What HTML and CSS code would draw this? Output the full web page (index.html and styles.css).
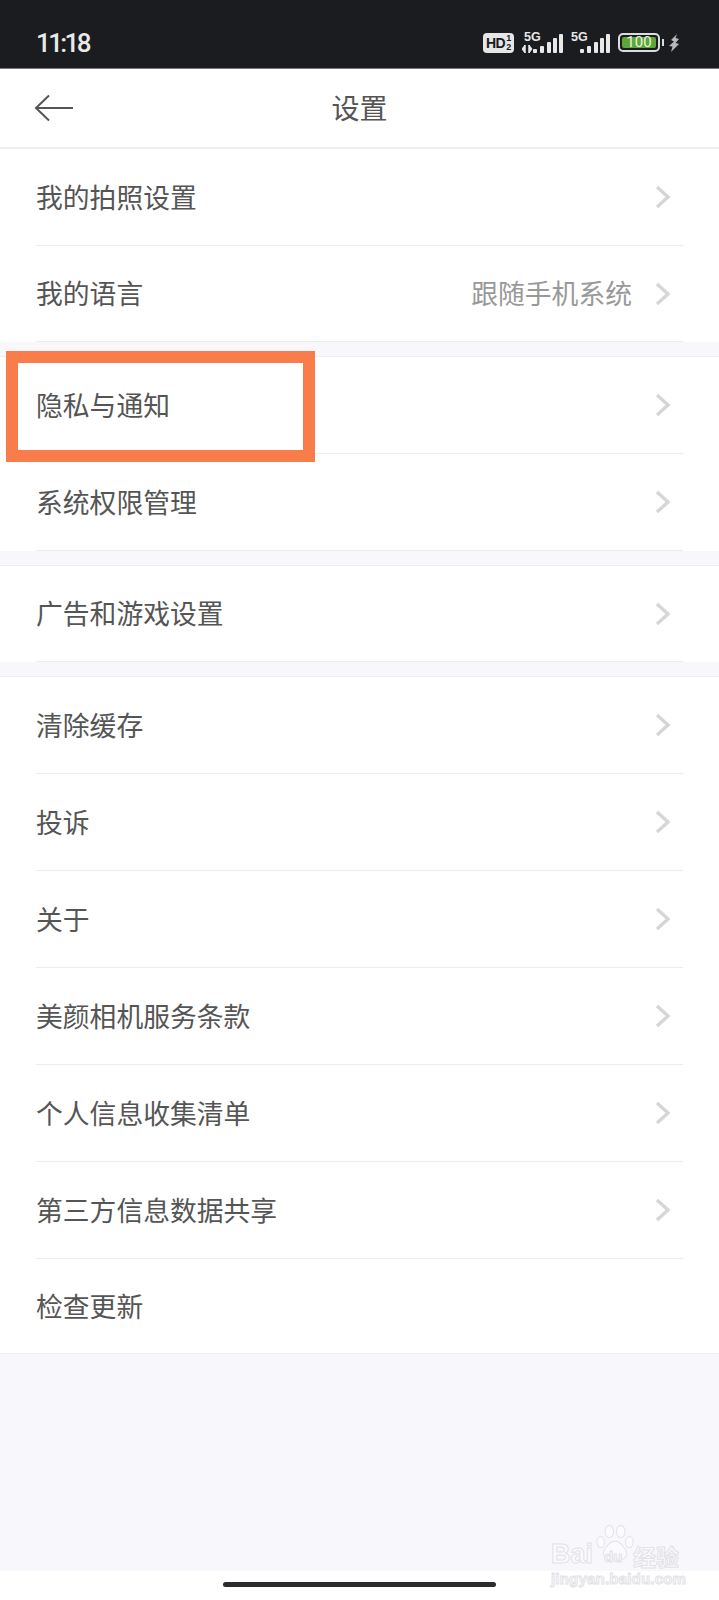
FILE: index.html
```html
<!DOCTYPE html>
<html lang="zh-CN">
<head><meta charset="UTF-8">
<meta name="viewport" content="width=device-width,initial-scale=1.0">
<title>设置</title>
<link rel="stylesheet" href="styles.css">
</head>
<body>

<svg class="defs" width="0" height="0">
  <symbol id="chev" viewBox="0 0 16 24"><path d="M2 2l11 10L2 22" fill="none" stroke="#d6d6d6" stroke-width="3.4"/></symbol>
</svg>

<div class="page">
  <!-- status bar -->
  <div class="status">
    <span class="time">11:18</span>
    <div class="status-icons">
      <div class="hd"><span class="hd-text">HD</span><span class="hd-sim"><i>1</i><i>2</i></span></div>
      <div class="net">
        <span class="net-label">5G</span>
        <svg width="41" height="20" viewBox="0 0 41 20">
          <path d="M3 12v8M0 16l3-4v8zM7 12v8M10 16l-3 4v-8z" fill="#e8e8e8" stroke="#e8e8e8" stroke-width="1"/>
          <rect x="11" y="16" width="4" height="4" rx="1" fill="#e8e8e8"/>
          <rect x="18" y="13" width="4" height="7" rx="1" fill="#e8e8e8"/>
          <rect x="25" y="9" width="4" height="11" rx="1" fill="#e8e8e8"/>
          <rect x="31" y="5" width="4" height="15" rx="1" fill="#e8e8e8"/>
          <rect x="37" y="1" width="4" height="19" rx="1" fill="#e8e8e8"/>
        </svg>
      </div>
      <div class="net">
        <span class="net-label">5G</span>
        <svg width="41" height="20" viewBox="0 0 41 20">
          <rect x="11" y="16" width="4" height="4" rx="1" fill="#e8e8e8"/>
          <rect x="18" y="13" width="4" height="7" rx="1" fill="#e8e8e8"/>
          <rect x="25" y="9" width="4" height="11" rx="1" fill="#e8e8e8"/>
          <rect x="31" y="5" width="4" height="15" rx="1" fill="#e8e8e8"/>
          <rect x="37" y="1" width="4" height="19" rx="1" fill="#e8e8e8"/>
        </svg>
      </div>
      <div class="battery"><span class="battery-fill">100</span></div>
      <span class="battery-tip"></span>
      <svg class="bolt" width="11" height="18" viewBox="0 0 11 18"><path d="M8 0 2 6l3 1.500L0 12l3.500 0.500L2 18l8-8-3.500-1L10 5 6.500 4z" fill="#b9b9b9"/></svg>
    </div>
  </div>

  <div class="header">
    <svg class="back" width="40" height="28" viewBox="0 0 40 28"><path d="M15 1.500 2 14l13 12.500M2 14h37" fill="none" stroke="#555" stroke-width="2"/></svg>
    <span class="title">设置</span>
  </div>

  <div class="group group-first">
    <div class="row"><span>我的拍照设置</span><svg class="chev"><use href="#chev"/></svg></div>
    <div class="row"><span>我的语言</span><span class="row-value">跟随手机系统</span><svg class="chev"><use href="#chev"/></svg></div>
  </div>

  <div class="group">
    <div class="row"><span>隐私与通知</span><svg class="chev"><use href="#chev"/></svg></div>
    <div class="row"><span>系统权限管理</span><svg class="chev"><use href="#chev"/></svg></div>
  </div>

  <div class="group group-single">
    <div class="row"><span>广告和游戏设置</span><svg class="chev"><use href="#chev"/></svg></div>
  </div>

  <div class="group group-last">
    <div class="row"><span>清除缓存</span><svg class="chev"><use href="#chev"/></svg></div>
    <div class="row"><span>投诉</span><svg class="chev"><use href="#chev"/></svg></div>
    <div class="row"><span>关于</span><svg class="chev"><use href="#chev"/></svg></div>
    <div class="row"><span>美颜相机服务条款</span><svg class="chev"><use href="#chev"/></svg></div>
    <div class="row"><span>个人信息收集清单</span><svg class="chev"><use href="#chev"/></svg></div>
    <div class="row"><span>第三方信息数据共享</span><svg class="chev"><use href="#chev"/></svg></div>
    <div class="row"><span>检查更新</span></div>
  </div>

  <div class="filler"></div>

  <div class="nav-bar"><span class="home"></span></div>

  <!-- annotation box + watermark sit over the screenshot -->
  <div class="highlight"></div>
  <div class="mark">
    <div class="mark-top">
      <span>Bai</span>
      <svg class="paw" width="40" height="40" viewBox="0 0 42 42">
        <g fill="#fbfbfd" stroke="#e6e6ea" stroke-width="1.200">
          <ellipse cx="6" cy="20" rx="4" ry="6"/>
          <ellipse cx="15" cy="9" rx="4.500" ry="6.500"/>
          <ellipse cx="27" cy="9" rx="4.500" ry="6.500"/>
          <ellipse cx="36" cy="20" rx="4" ry="6"/>
          <path d="M21 19c-6 0-8 5-11 9-3 5 0 11 6 10 3-.5 7-.5 10 0 6 1 9-5 6-10-3-4-5-9-11-9z"/>
        </g>
      </svg>
      <span class="mark-du">du</span>
      <span class="mark-cn">经验</span>
    </div>
    <div class="mark-url">jingyan.baidu.com</div>
  </div>
</div>

</body>
</html>
```

FILE: styles.css
```css
*,*::before,*::after{box-sizing:border-box;margin:0;padding:0}
body{
  background:#f8f8fc;
  font-family:"Noto Sans CJK SC","Noto Sans",sans-serif;
  color:#555;
}
.defs{position:absolute}

.page{
  position:relative;
  width:719px;
  height:1600px;
  overflow:hidden;
  display:flex;
  flex-direction:column;
}

/* === STATUS BAR === */
.status{
  height:69px;
  flex:none;
  background:#1b1c20;
  border-bottom:1px solid #77787a;
  display:flex;
  align-items:center;
  padding:17px 0 0 36px;
}
.time{
  font-family:Roboto,sans-serif;
  font-size:26px;
  font-weight:500;
  letter-spacing:-2.600px;
  color:#e9e9e9;
}
.status-icons{
  margin-left:auto;
  margin-right:39px;
  display:flex;
  align-items:center;
  height:30px;
}
.hd{
  width:31px;
  height:20px;
  border-radius:4px;
  background:#e6e6e6;
  color:#1b1c20;
  display:flex;
  align-items:center;
  padding-left:3px;
  margin-right:8px;
  font-family:"Liberation Sans",sans-serif;
  font-weight:700;
}
.hd-text{font-size:14px;letter-spacing:-.5px}
.hd-sim{
  display:flex;
  flex-direction:column;
  font-size:9px;
  line-height:9px;
  margin-left:1px;
}
.hd-sim i{font-style:normal}
.net{
  position:relative;
  width:41px;
  height:20px;
  margin-right:6px;
  display:flex;
}
.net + .battery{margin-left:2px}
.net-label{
  position:absolute;
  left:2px;
  top:-3px;
  font-family:"Liberation Sans",sans-serif;
  font-weight:700;
  font-size:12.500px;
  line-height:14px;
  color:#e8e8e8;
}
.battery{
  width:42px;
  height:19px;
  border:2px solid #dcdcdc;
  border-radius:5px;
  padding:2px;
  display:flex;
}
.battery-fill{
  flex:1;
  background:#5ea53a;
  border-radius:2px;
  color:#e8f4de;
  font-family:Roboto,sans-serif;
  font-size:15px;
  line-height:11px;
  text-align:center;
}
.battery-tip{
  width:2px;
  height:7px;
  margin-left:2px;
  background:#dcdcdc;
}
.bolt{margin-left:5px}

/* === HEADER === */
.header{
  height:80px;
  flex:none;
  background:#fff;
  border-bottom:2px solid #eeeeee;
  display:flex;
  align-items:center;
  justify-content:center;
  position:relative;
}
.back{position:absolute;left:34px;top:25px}
.title{font-size:28px;color:#555;margin-bottom:3px}

/* === LIST === */
.group{
  flex:none;
  background:#fff;
  margin-top:14px;
  border-top:1px solid #eeeef1;
}
.group-first{margin-top:0;border-top:0}
.group-first .row:last-child{height:96px}
.row{
  height:97px;
  margin:0 36px;
  border-bottom:1px solid #ececec;
  display:flex;
  align-items:center;
  font-size:26.800px;
  color:#555;
}
.row > span{margin-bottom:2px}
.group-single .row{height:96px}
.group-last{border-bottom:1px solid #eeeef1}
.group-last .row:last-child{height:94px;border-bottom:0}
.row-value{
  margin-left:auto;
  color:#999;
}
.chev{
  flex:none;
  width:16px;
  height:24px;
  margin-left:auto;
  margin-right:12px;
}
.row-value + .chev{margin-left:23px}

.filler{flex:1}

/* === GESTURE BAR === */
.nav-bar{
  height:29px;
  flex:none;
  background:#fff;
  display:flex;
  justify-content:center;
}
.home{
  width:273px;
  height:5px;
  margin-top:11px;
  border-radius:3px;
  background:#2b2b2d;
}

/* === ANNOTATION === */
.highlight{
  position:absolute;
  left:6px;
  top:351px;
  width:309px;
  height:111px;
  border:12px solid #f87d4b;
}

/* === WATERMARK === */
.mark{
  position:absolute;
  left:551px;
  top:1522px;
  width:130px;
  color:#fbfbfd;
  -webkit-text-stroke:1px #e2e2e6;
}
.mark-top{
  display:flex;
  align-items:flex-end;
  height:46px;
  position:relative;
  font-family:"Liberation Sans",sans-serif;
  font-weight:700;
  font-size:27px;
  line-height:28px;
}
.paw{position:absolute;left:44px;top:1px}
.mark-du{
  position:absolute;
  left:53px;
  bottom:2px;
  font-size:15px;
  line-height:18px;
}
.mark-cn{
  position:absolute;
  left:82px;
  bottom:-2px;
  font-family:"Noto Sans CJK SC",sans-serif;
  font-size:23px;
  line-height:28px;
}
.mark-url{
  font-family:"Liberation Sans",sans-serif;
  font-weight:700;
  font-size:15px;
  line-height:20px;
  letter-spacing:.2px;
  margin-top:1px;
  white-space:nowrap;
}
```
